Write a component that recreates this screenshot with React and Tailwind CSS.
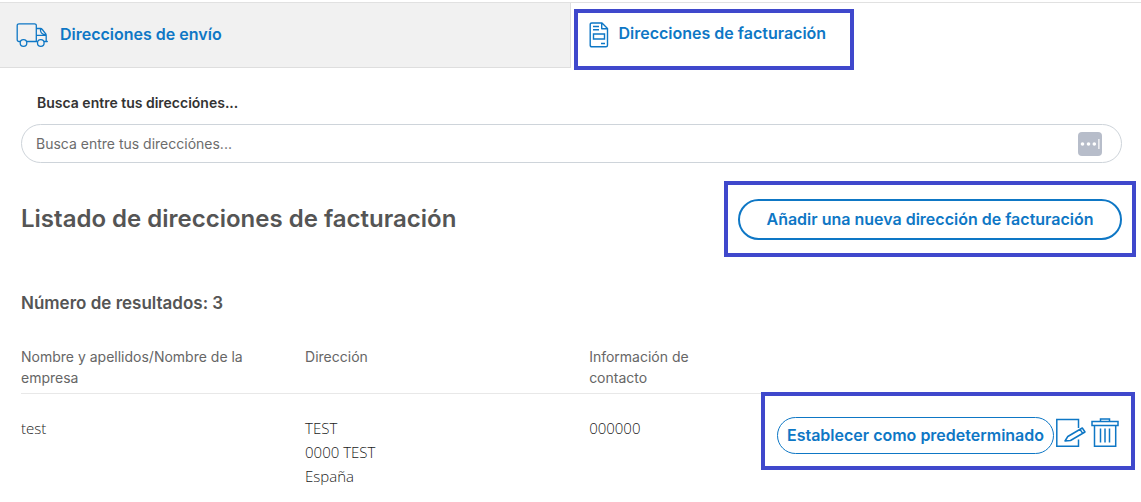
const addresses = [
  { id: 1, name: 'test', lines: ['TEST', '0000 TEST', 'España'], contact: '000000' },
]

function TruckIcon() {
  return (
    <svg className="w-8 h-6 mt-px flex-shrink-0" fill="none" stroke="currentColor" strokeWidth={1.3} viewBox="0 0 32 24">
      <path strokeLinejoin="round" strokeLinecap="round"
        d="M4 18.5H3A1.8 1.8 0 0 1 1.2 16.700V2.600A1.8 1.8 0 0 1 3 0.800H18.500A1.8 1.8 0 0 1 20.300 2.600V18.500M10.500 18.500H20.800M20.300 5.500H24.500Q25.500 5.500 26.300 6.500L29.300 10.300Q30.200 11.300 30.200 12.500V18.500M20.300 12.300H30M24.500 5.500V7.500Q24.800 11 29.500 12M28.500 18.500H31.300" />
      <circle cx="7.500" cy="20" r="3.300" />
      <circle cx="24.800" cy="20" r="3.300" />
    </svg>
  )
}

function InvoiceIcon() {
  return (
    <svg className="w-5 h-[26px] mt-px flex-shrink-0" fill="none" stroke="currentColor" strokeWidth={1.4} viewBox="0 0 20 26">
      <path strokeLinejoin="round"
        d="M2.800 1H13L18.500 6.500V23.300Q18.500 24.800 17 24.800H2.800Q1.200 24.800 1.200 23.300V2.500Q1.200 1 2.800 1ZM12.700 1V6.800H18.500" />
      <path d="M4 4.500H10M4 7.800H10M12 21.500H16M4.500 12H15.500V17H4.500Z" />
    </svg>
  )
}

function EditIcon() {
  return (
    <svg className="w-[30px] h-[30px]" fill="none" stroke="currentColor" strokeWidth={1.5} viewBox="0 0 30 30">
      <path d="M22.500 11V2.500H0.800V29.200H22.500V22.500" />
      <path strokeLinejoin="round" d="M9 24L11.800 19.500L26.300 11L29 15L14.500 23.500Z M24 12.400L26.700 16.400" />
    </svg>
  )
}

function TrashIcon() {
  return (
    <svg className="w-7 h-[30px]" fill="none" stroke="currentColor" strokeWidth={1.5} viewBox="0 0 28 30">
      <path d="M1 4.500H27V8.500H1ZM9.500 4.500V2H18.500V4.500M3.500 8.500V29.200H24.700V8.500M9.500 11.500V25.500M14 11.500V25.500M18.500 11.500V25.500" />
    </svg>
  )
}

function Tabs() {
  return (
    <nav className="flex items-start border-t border-[#e1e1e1] text-base leading-6 font-semibold text-[#0e77c5]">
      <a href="#envio" className="flex w-1/2 h-[65px] gap-3 pt-[19px] pl-4 bg-[#f1f1f1] border-r border-b border-[#dedede]">
        <TruckIcon />
        <span>Direcciones de envío</span>
      </a>
      <a href="#facturacion" className="flex gap-2.5 mt-1.5 ml-[3px] w-[280px] h-[61px] pl-[11px] pt-2 border-4 border-[#3f48cc]">
        <InvoiceIcon />
        <span>Direcciones de facturación</span>
      </a>
    </nav>
  )
}

function SearchBox() {
  return (
    <div className="ml-[21px] mr-[19px] mt-[23px] text-sm">
      <label htmlFor="search" className="block pl-4 leading-5 font-semibold text-[#333]">
        Busca entre tus direcciónes...
      </label>
      <div className="flex items-center mt-[11px] h-[39px] pl-3.5 pr-[19px] rounded-full border border-[#ced4da]">
        <input id="search" type="text" placeholder="Busca entre tus direcciónes..."
          className="flex-1 min-w-0 outline-none placeholder:text-[#6c6c6c]" />
        <svg className="w-6 h-6" viewBox="0 0 24 24">
          <rect width="24" height="24" rx="4" fill="#b7bdca" />
          <g fill="#fff">
            <circle cx="4.500" cy="12" r="1.800" />
            <circle cx="10.500" cy="12" r="1.800" />
            <circle cx="16.300" cy="12" r="1.800" />
            <rect x="20" y="7" width="1.700" height="10" opacity="0.7" />
          </g>
        </svg>
      </div>
    </div>
  )
}

function AddressRow({ address }) {
  return (
    <tr className="align-top font-['Open_Sans',sans-serif] text-[15px] leading-6 font-light text-[#222]">
      <td className="pt-[22px]">{address.name}</td>
      <td className="pt-[22px]">
        {address.lines.map(line => <div key={line}>{line}</div>)}
      </td>
      <td className="pt-[22px]">{address.contact}</td>
      <td>
        <div className="flex items-start -mt-0.5 h-[78px] pt-[21px] pl-3 border-4 border-[#3f48cc] text-[#0e77c5]">
          <button className="h-[37px] w-[277px] pb-0.5 rounded-full border border-[#0e77c5] font-['Inter',sans-serif] text-base font-semibold whitespace-nowrap">
            Establecer como predeterminado
          </button>
          <button className="ml-0.5" title="Editar" aria-label="Editar dirección"><EditIcon /></button>
          <button className="ml-[5px]" title="Eliminar" aria-label="Eliminar dirección"><TrashIcon /></button>
        </div>
      </td>
    </tr>
  )
}

export default function App() {
  return (
    <main className="pt-0.5 bg-white font-['Inter',sans-serif] text-[#555]">
      <Tabs />
      <SearchBox />

      {/* Title and add button */}
      <div className="flex items-center justify-between mt-[18px] pl-[21px] pr-[5px]">
        <h1 className="text-2xl leading-8 font-semibold">Listado de direcciones de facturación</h1>
        <div className="px-2.5 pt-3.5 pb-[13px] border-4 border-[#3f48cc]">
          <button className="block w-96 h-[41px] pb-0.5 rounded-full border-2 border-[#0e77c5] text-base font-semibold text-[#0e77c5]">
            Añadir una nueva dirección de facturación
          </button>
        </div>
      </div>

      <p className="mt-[34px] ml-[21px] text-[17px] leading-6 font-semibold">Número de resultados: 3</p>

      {/* Address list */}
      <div className="mt-[31px] pl-[21px] pr-1.5">
        <table className="w-full table-fixed border-separate border-spacing-0 text-left">
          <thead>
            <tr className="align-top text-sm leading-[21px] text-[#666]">
              <th className="w-[25.5%] pr-8 pb-[5px] font-normal border-b border-[#e8e8e8]">Nombre y apellidos/Nombre de la empresa</th>
              <th className="w-[25.5%] pb-[5px] font-normal border-b border-[#e8e8e8]">Dirección</th>
              <th className="pr-12 pb-[5px] font-normal border-b border-[#e8e8e8]">Información de contacto</th>
              <th className="w-[374px]" aria-label="Acciones" />
            </tr>
          </thead>
          <tbody>
            {addresses.map(address => <AddressRow key={address.id} address={address} />)}
          </tbody>
        </table>
      </div>
    </main>
  )
}
